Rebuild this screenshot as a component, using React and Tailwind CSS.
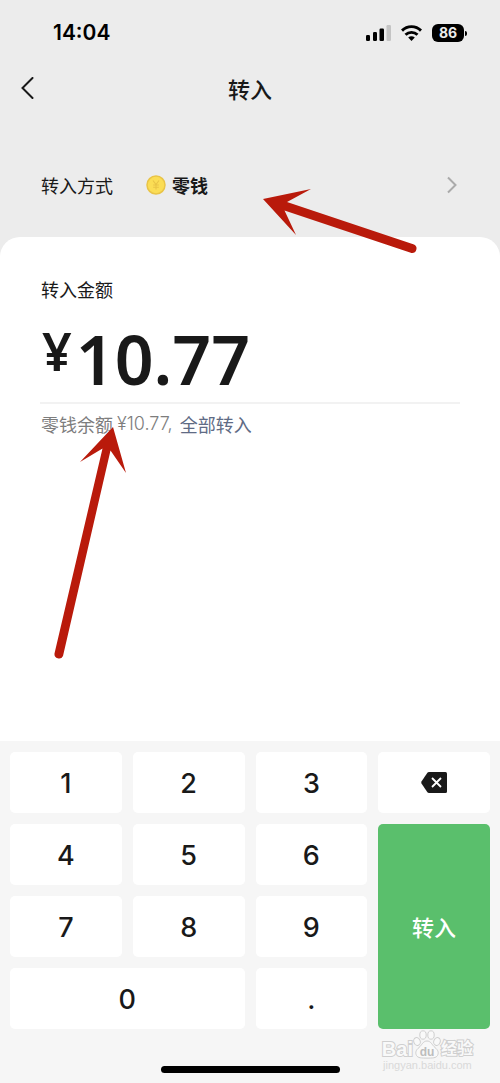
const keys = ['1', '2', '3', '4', '5', '6', '7', '8', '9'];

function StatusBar() {
  return (
    <div className="flex h-[66px] items-center justify-between pr-[33px] pl-[53px]">
      <span className="font-['Inter',sans-serif] text-[21px] font-semibold leading-6 text-black">14:04</span>
      <div className="flex items-center gap-[10px]">
        <svg width="25" height="16" viewBox="0 0 25 16" role="img" aria-label="信号">
          <rect x="0" y="10" width="4" height="6" rx="1.2" />
          <rect x="7" y="7" width="4" height="9" rx="1.2" />
          <rect x="13.5" y="3.5" width="4.500" height="12.5" rx="1.2" />
          <rect x="20.5" y="0" width="4.500" height="16" rx="1.2" fill="#c4c4c4" />
        </svg>
        <svg width="21" height="16" viewBox="0 0 21 16" role="img" aria-label="无线网络">
          <g fill="none" stroke="#000" strokeWidth="2.9">
            <path d="M1 5.600C6.300.3 14.700.3 20 5.600" />
            <path d="M4.500 9.800c3.400-3.300 8.600-3.300 12 0" />
          </g>
          <path d="M10.500 16l-3.300-3.600c1.900-1.600 4.700-1.600 6.600 0z" />
        </svg>
        <div className="flex items-center gap-px">
          <span className="flex h-[18px] w-8 items-center justify-center rounded-md bg-black font-['Inter',sans-serif] text-sm font-bold text-[#ececec]">
            86
          </span>
          <span className="h-[5px] w-[2px] rounded-r-full bg-black" />
        </div>
      </div>
    </div>
  );
}

function Watermark() {
  return (
    <div className="pointer-events-none absolute right-[27px] bottom-3 flex flex-col items-center text-[#d9d9d9]">
      <div className="flex items-end">
        <span className="font-['Liberation_Sans',sans-serif] text-[20px] font-bold leading-5 text-[#f9f9f9] [-webkit-text-stroke:2px_#cfcfcf] [paint-order:stroke_fill]">
          Bai
        </span>
        <svg width="28" height="29" viewBox="0 0 28 29" aria-hidden="true">
          <g fill="#f9f9f9" stroke="#cfcfcf" strokeWidth="1">
            <ellipse cx="4" cy="11.500" rx="3.200" ry="4" transform="rotate(-20 4 11.500)" />
            <ellipse cx="10" cy="5" rx="3.200" ry="4.200" />
            <ellipse cx="18" cy="5" rx="3.200" ry="4.200" />
            <ellipse cx="24" cy="11.500" rx="3.200" ry="4" transform="rotate(20 24 11.500)" />
            <path d="M14 11c-4 0-5 4-8 6.500-3 2.500-4 5-2.500 8 1.500 2.600 5 2.600 10.500 2.600s9 0 10.500-2.600c1.500-3 .5-5.500-2.500-8C19 15 18 11 14 11z" />
          </g>
          <text x="14" y="25.500" textAnchor="middle" fontSize="12" fontWeight="700" fontFamily="Liberation Sans" fill="#bdbdbd">
            du
          </text>
        </svg>
        <span className="text-[16px] font-bold leading-6 text-[#f9f9f9] [-webkit-text-stroke:2px_#cfcfcf] [paint-order:stroke_fill]">经验</span>
      </div>
      <span className="font-['Liberation_Sans',sans-serif] text-[11px] leading-3">jingyan.baidu.com</span>
    </div>
  );
}

function Arrows() {
  return (
    <svg className="pointer-events-none absolute top-0 left-0" width="500" height="680" viewBox="0 0 500 680" aria-hidden="true">
      <g fill="#b91a0b">
        <path d="M263 199L311 189L287 202L414 244.500A4.500 4.500 0 0 1 411.500 253L284.500 210.500L296 235Z" />
        <path d="M113 427L126 473L110.500 450.500L63 656A4.500 4.500 0 0 1 54.500 653.500L102.500 448.500L80 462Z" />
      </g>
    </svg>
  );
}

export default function App() {
  const key = "flex items-center justify-center rounded-[5px] bg-white pt-[3px] font-['Inter',sans-serif] text-[27px] font-medium text-[#191919]";
  return (
    <main className="relative flex min-h-screen flex-col bg-[#ececec] font-['Noto_Sans_CJK_SC',sans-serif] text-[#191919]">
      <StatusBar />
      <header className="grid h-11 grid-cols-[1fr_auto_1fr] items-center px-5">
        <button type="button" aria-label="返回" className="justify-self-start">
          <svg width="14" height="22" viewBox="0 0 14 22" fill="none" stroke="#191919" strokeWidth="2" strokeLinecap="round">
            <path d="M12.500 1L2.500 11L12.500 21" />
          </svg>
        </button>
        <h1 className="text-[22px] font-medium leading-8">转入</h1>
      </header>
      <button type="button" className="mt-[51px] flex h-12 items-center pr-[42px] pl-[41px] text-left text-[18px] leading-6">
        <span className="w-[105px]">转入方式</span>
        <svg width="20" height="20" viewBox="0 0 20 20" fill="none" aria-hidden="true">
          <circle cx="10" cy="10" r="9" fill="#fbdd55" stroke="#e9c447" strokeWidth="1.500" />
          <path d="M7 5.500l3 4 3-4M10 9.500v5M7.200 10h5.600M7.200 12.300h5.600" stroke="#e9c447" strokeWidth="1.100" />
        </svg>
        <span className="ml-[6px] font-bold">零钱</span>
        <svg className="ml-auto" width="12" height="18" viewBox="0 0 12 18" fill="none" stroke="#aaa" strokeWidth="2">
          <path d="M2 1.500L9.500 9L2 16.500" />
        </svg>
      </button>

      <section className="mt-7 flex-1 rounded-t-[20px] bg-white px-10 pt-10">
        <label htmlFor="amount" className="block pl-px text-[18px] leading-6">转入金额</label>
        <div className="mt-5 flex h-[83px] items-start border-b-2 border-[#f2f2f2] pl-[2px] font-['Noto_Sans',sans-serif] font-semibold">
          <span className="pt-1 text-[52px] leading-[52px]">¥</span>
          <input
            id="amount"
            inputMode="decimal"
            defaultValue="10.77"
            className="ml-1 h-[76px] w-full min-w-0 bg-transparent text-[68px] leading-[76px] outline-none"
          />
        </div>
        <p className="mt-2 flex pl-px text-[18px] leading-6 text-[#7d7d7d]">
          <span>零钱余额</span>
          <span className="mr-[7px] ml-1 font-['Inter',sans-serif] font-light">¥10.77,</span>
          <button type="button" className="text-[#5f6b85]">全部转入</button>
        </p>
      </section>

      <section className="relative bg-[#f6f6f6] px-[10px] pt-[11px] pb-[10px]">
        <div className="grid auto-rows-[61px] grid-cols-4 gap-[11px]">
          {keys.slice(0, 3).map((n) => (
            <button key={n} type="button" className={key}>{n}</button>
          ))}
          <button type="button" aria-label="删除" className="flex items-center justify-center rounded-[5px] bg-white">
            <svg width="26" height="21" viewBox="0 0 26 21">
              <path d="M8 0h16.500Q26 0 26 1.500v18Q26 21 24.500 21H8Q7 21 6.400 20.200L.5 11.500Q0 10.500 .5 9.500L6.400.8Q7 0 8 0z" fill="#191919" />
              <path d="M11 6l9 9M20 6l-9 9" stroke="#fff" strokeWidth="1.800" />
            </svg>
          </button>
          {keys.slice(3, 6).map((n) => (
            <button key={n} type="button" className={key}>{n}</button>
          ))}
          <button type="button" className="row-span-3 rounded-[5px] bg-[#5abf6c] text-[22px] font-medium text-white">转入</button>
          {keys.slice(6).map((n) => (
            <button key={n} type="button" className={key}>{n}</button>
          ))}
          <button type="button" className={`${key} col-span-2`}>0</button>
          <button type="button" className={key}>.</button>
        </div>
        <div className="mx-auto mt-[37px] h-[7px] w-[179px] rounded-full bg-black" />
        <Watermark />
      </section>
      <Arrows />
    </main>
  );
}
